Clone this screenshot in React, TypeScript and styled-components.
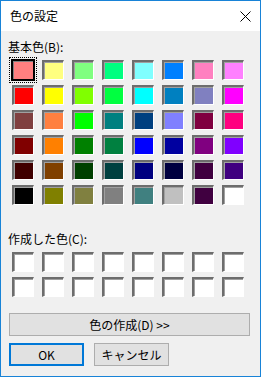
import React from "react";
import styled, { createGlobalStyle, css } from "styled-components";

const Global = createGlobalStyle`
  html, body { margin: 0; padding: 0; background: #ffffff; }
  body { font-family: "Noto Sans CJK JP", "Noto Sans", sans-serif; }
`;

const Window = styled.div`
  box-sizing: border-box;
  width: 261px;
  height: 377px;
  border: 1px solid #1883d7;
  display: flex;
  flex-direction: column;
  background: #f0f0f0;
  font-family: "Noto Sans CJK JP", "Noto Sans", sans-serif;
  font-size: 12px;
  color: #000;
`;

const TitleBar = styled.div`
  height: 30px;
  background: #ffffff;
  display: flex;
  align-items: center;
  justify-content: space-between;
  padding: 0 9px 0 9px;
  flex-shrink: 0;
`;

const Title = styled.div`
  font-size: 12px;
  line-height: 16px;
  margin-top: -1px;
`;

const Close = styled.svg`
  width: 11px;
  height: 11px;
`;

const Body = styled.div`
  display: flex;
  flex-direction: column;
  padding: 8px 0 0 0;
`;

const Label = styled.div<{ $top: number }>`
  margin: ${(p) => p.$top}px 0 0 7px;
  line-height: 16px;
  height: 16px;
`;

const Grid = styled.div`
  display: grid;
  grid-template-columns: repeat(8, 22px);
  grid-auto-rows: 20px;
  column-gap: 8px;
  row-gap: 5px;
  margin: 5px 0 0 11px;
`;

const Swatch = styled.div<{ $c: string; $sel?: boolean }>`
  box-sizing: border-box;
  width: 22px;
  height: 20px;
  background: ${(p) => p.$c};
  border-style: solid;
  border-width: 2px 1px 1px 2px;
  border-color: #6d6d6d #ffffff #ffffff #6d6d6d;
  box-shadow: inset 1px 1px 0 #a0a0a0;
  ${(p) =>
    p.$sel &&
    css`
      border-color: #000;
      border-width: 1px;
      box-shadow: 0 0 0 1px #000, inset 1px 1px 0 #808080;
      outline: 1px dotted #000;
      outline-offset: 2px;
    `}
`;

const WideButton = styled.div`
  box-sizing: border-box;
  margin: 16px 0 0 8px;
  width: 241px;
  height: 23px;
  border: 1px solid #adadad;
  background: #e1e1e1;
  display: flex;
  align-items: center;
  justify-content: center;
  line-height: 16px;
`;

const ButtonRow = styled.div`
  display: flex;
  gap: 10px;
  margin: 7px 0 0 8px;
`;

const Button = styled.div<{ $default?: boolean }>`
  box-sizing: border-box;
  width: 75px;
  height: 23px;
  background: #e1e1e1;
  display: flex;
  align-items: center;
  justify-content: center;
  line-height: 16px;
  border: ${(p) => (p.$default ? "2px solid #0078d7" : "1px solid #adadad")};
`;

const basic = [
  "#FF8080", "#FFFF80", "#80FF80", "#00FF80", "#80FFFF", "#0080FF", "#FF80C0", "#FF80FF",
  "#FF0000", "#FFFF00", "#80FF00", "#00FF40", "#00FFFF", "#0080C0", "#8080C0", "#FF00FF",
  "#804040", "#FF8040", "#00FF00", "#008080", "#004080", "#8080FF", "#800040", "#FF0080",
  "#800000", "#FF8000", "#008000", "#008040", "#0000FF", "#0000A0", "#800080", "#8000FF",
  "#400000", "#804000", "#004000", "#004040", "#000080", "#000040", "#400040", "#400080",
  "#000000", "#808000", "#808040", "#808080", "#408080", "#C0C0C0", "#400040", "#FFFFFF",
];

export default function App() {
  return (
    <>
      <Global />
      <Window>
        <TitleBar>
          <Title>色の設定</Title>
          <Close viewBox="0 0 11 11">
            <path d="M0.5 0.5 L10.5 10.5 M10.5 0.5 L0.5 10.5" stroke="#000" strokeWidth="1" fill="none" />
          </Close>
        </TitleBar>
        <Body>
          <Label $top={0}>基本色(B):</Label>
          <Grid>
            {basic.map((c, i) => (
              <Swatch key={i} $c={c} $sel={i === 0} />
            ))}
          </Grid>
          <Label $top={26}>作成した色(C):</Label>
          <Grid>
            {Array.from({ length: 16 }).map((_, i) => (
              <Swatch key={i} $c="#FFFFFF" />
            ))}
          </Grid>
          <WideButton>色の作成(D) &gt;&gt;</WideButton>
          <ButtonRow>
            <Button $default>OK</Button>
            <Button>キャンセル</Button>
          </ButtonRow>
        </Body>
      </Window>
    </>
  );
}
